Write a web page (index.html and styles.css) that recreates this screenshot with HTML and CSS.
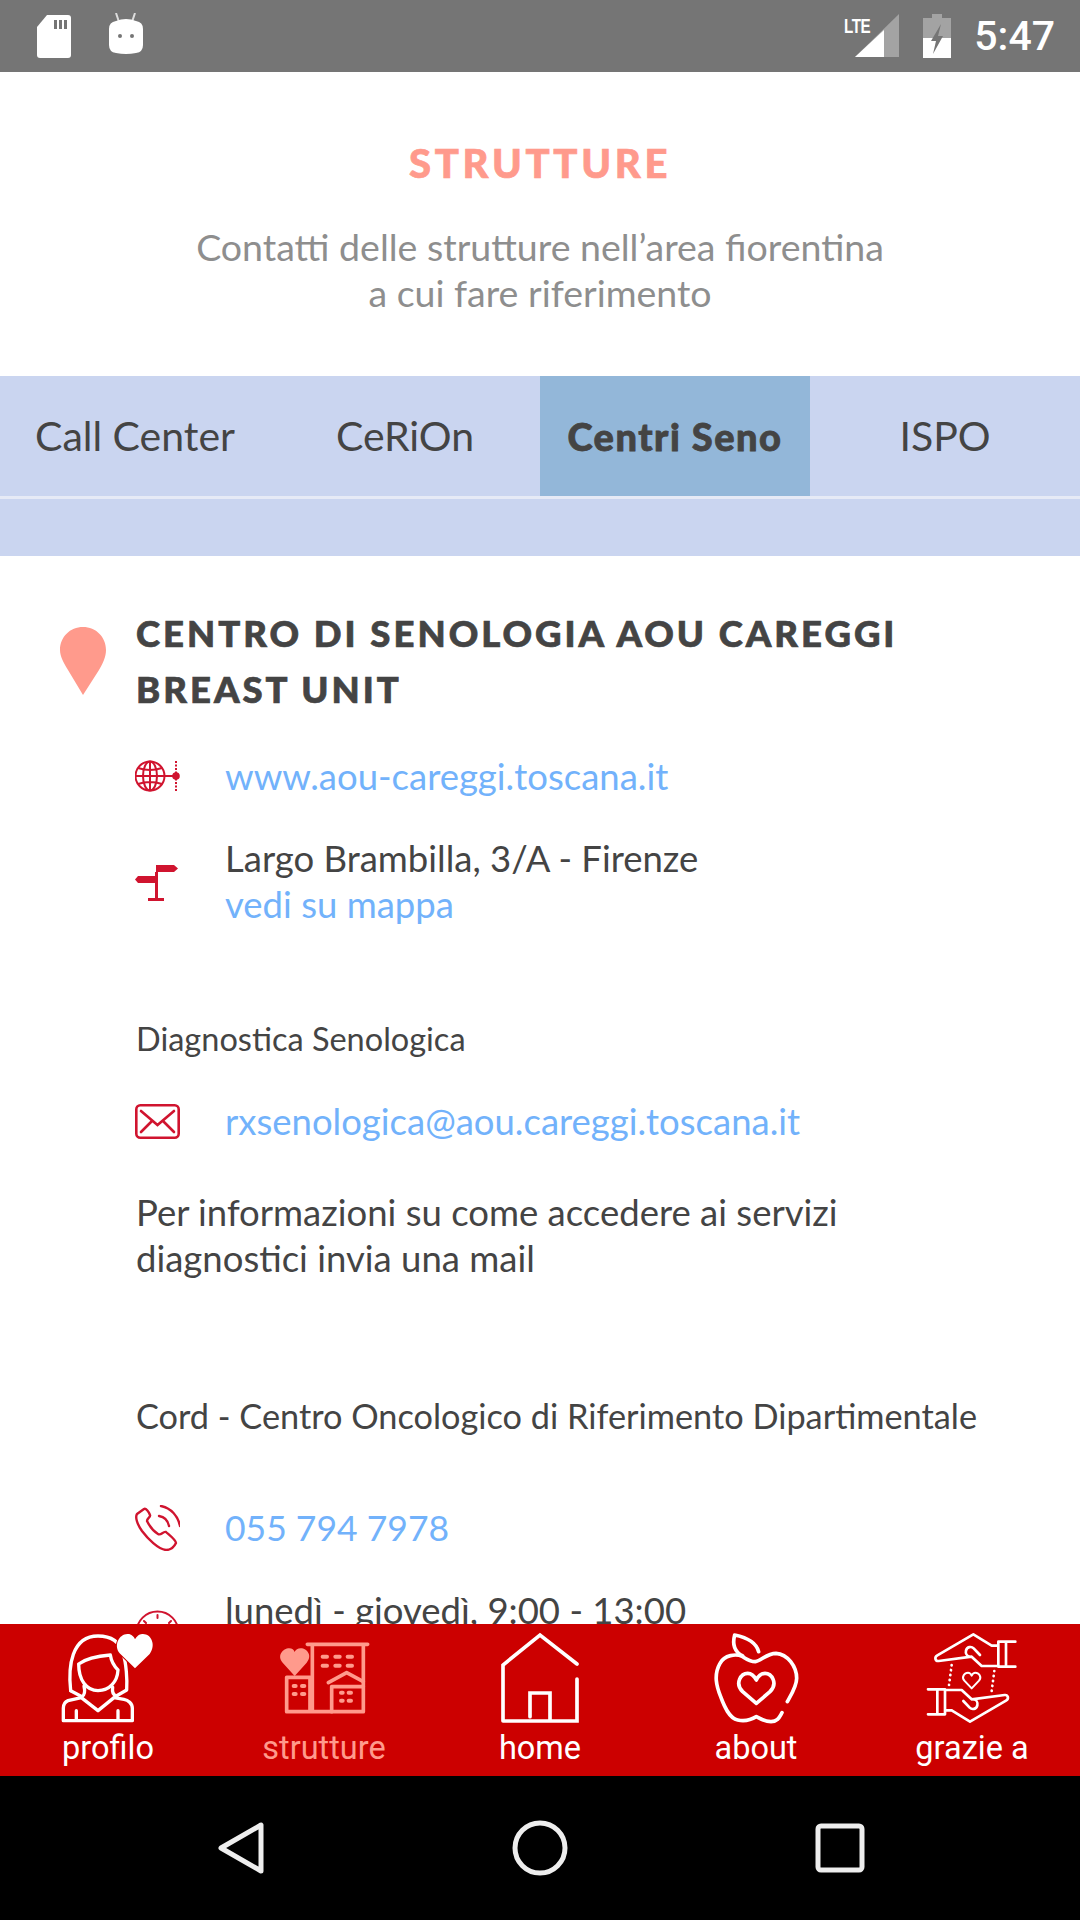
FILE: index.html
```html
<!DOCTYPE html>
<html lang="it">
<head>
    <meta charset="UTF-8">
    <title>Strutture</title>
    <link rel="stylesheet" href="styles.css">
</head>
<body>
    <!-- Barra di stato -->
    <div class="status-bar">
        <svg class="st-sd" viewBox="0 0 34 43"><path d="M10 0H31Q34 0 34 3V40Q34 43 31 43H3Q0 43 0 40V12Z" fill="#fff"/><path d="M17 5h3v9h-3zM22 5h3v9h-3zM27 5h3v9h-3z" fill="#757575"/></svg>
        <svg class="st-bug" viewBox="0 0 36 41"><path d="M8 0l3 9M27 0l-3 9" stroke="#ddd" stroke-width="2" fill="none"/><path d="M8 8Q18 4 28 8Q35 9 35 16V32Q35 39 28 40Q18 42 8 40Q1 39 1 32V16Q1 9 8 8Z" fill="#fff"/><circle cx="12" cy="23" r="2" fill="#757575"/><circle cx="24" cy="23" r="2" fill="#757575"/></svg>
        <span class="st-space"></span>
        <svg class="st-signal" viewBox="0 0 54 44"><path d="M54 0V43H10Z" fill="#a3a3a3"/><path d="M39 16V43H10Z" fill="#fff"/><text transform="translate(-1 19) scale(.95 1.25)" class="st-lte">LTE</text></svg>
        <svg class="st-batt" viewBox="0 0 28 44"><path d="M9 0H19V4H28V44H0V4H9Z" fill="#a3a3a3"/><path d="M0 24H28V44H0Z" fill="#fff"/><path d="M18 10L8 27H13L10 40L20 22H15Z" fill="#757575"/></svg>
        <span class="st-time">5:47</span>
    </div>

    <div class="intro">
        <h1>STRUTTURE</h1>
        <p>Contatti delle strutture nell’area fiorentina<br>a cui fare riferimento</p>
    </div>

    <!-- Tab -->
    <div class="tabs">
        <div class="tab">Call Center</div>
        <div class="tab">CeRiOn</div>
        <div class="tab active">Centri Seno</div>
        <div class="tab">ISPO</div>
    </div>
    <div class="tabs-band"></div>

    <div class="content">
        <div class="title-row">
            <svg class="pin" viewBox="0 0 46 68"><path d="M23 0C36 0 46 10 46 23C46 30 43 36 39 43L23 68L8 43C4 36 0 30 0 23C0 10 10 0 23 0Z" fill="#ff9a8c"/></svg>
            <h2>CENTRO DI SENOLOGIA AOU CAREGGI<br>BREAST UNIT</h2>
        </div>

        <div class="row gap-m">
            <svg class="ico" viewBox="0 0 45 32"><g fill="none" stroke="#d0142f" stroke-width="2"><circle cx="15" cy="16" r="14.500"/><ellipse cx="15" cy="16" rx="7" ry="14.500"/><path d="M15 1.500V30.500M1 16H40M3 8Q15 12 27 8M3 24Q15 20 27 24"/><path d="M41 1V31" stroke-dasharray="2 1.500"/></g><circle cx="41" cy="16" r="3.800" fill="#d0142f"/></svg>
            <a class="link">www.aou-careggi.toscana.it</a>
        </div>

        <div class="row gap-m">
            <svg class="ico ico-sign" viewBox="0 0 45 40"><path d="M21 1H39L43 4.500L39 8H21ZM3 12H22V19H3L0 15.500Z" fill="#d0142f"/><path d="M20 8H23V35H20ZM13 34H29V37H13Z" fill="#d0142f"/></svg>
            <div>
                <div>Largo Brambilla, 3/A - Firenze</div>
                <a class="link">vedi su mappa</a>
            </div>
        </div>

        <div class="plain gap-xl thin">Diagnostica Senologica</div>

        <div class="row gap-m">
            <svg class="ico" viewBox="0 0 45 35"><g fill="none" stroke="#d0142f" stroke-width="2.600" stroke-linecap="round"><rect x="1.300" y="1.300" width="42.400" height="32.400" rx="4"/><path d="M6 7L22.500 21L39 7M6 28L17 17M39 28L28 17"/></g></svg>
            <a class="link">rxsenologica@aou.careggi.toscana.it</a>
        </div>

        <div class="plain gap-l">Per informazioni su come accedere ai servizi<br>diagnostici invia una mail</div>

        <div class="plain gap-xxl cord">Cord - Centro Oncologico di Riferimento Dipartimentale</div>

        <div class="row gap-call">
            <svg class="ico" viewBox="0 0 45 46"><g fill="none" stroke="#d0142f" stroke-width="2.400" stroke-linecap="round" stroke-linejoin="round"><path d="M9 4L2 9C0 12 2 19 7 26C13 34 23 44 31 45C35 45 39 42 41 38C41 35 33 29 31 27C28 26 26 31 23 29C18 26 14 20 12 16C12 13 16 12 15 10C14 7 11 3 9 4Z"/><path d="M24 11C30 12 33 16 34 21M26 1C36 3 43 11 45 21"/></g></svg>
            <a class="link phone">055 794 7978</a>
        </div>

        <div class="row gap-m row-top">
            <svg class="ico ico-clock" viewBox="0 0 45 45"><g fill="none" stroke="#d0142f" stroke-width="2"><circle cx="22.500" cy="22.500" r="21"/><path d="M22.500 5V8M9 11L11 13M36 11L34 13" stroke-linecap="round"/></g></svg>
            <div>lunedì - giovedì, 9:00 - 13:00</div>
        </div>
    </div>

    <!-- Menu in basso -->
    <div class="bottom-nav">
        <div class="nav-item">
            <svg viewBox="0 0 360 288"><g fill="none" stroke="#fff" stroke-width="10" stroke-linecap="round" stroke-linejoin="round">
                <path d="M68 182C60 110 70 18 150 18C190 18 215 35 225 70C235 100 238 150 236 180L205 198C195 195 192 185 194 172"/>
                <path d="M68 182L102 200C110 195 112 185 108 168"/>
                <path d="M92 102C115 85 150 78 187 75C190 95 200 110 210 120C208 155 185 182 150 182C115 182 92 150 92 102Z"/>
                <path d="M100 203L60 212C50 216 46 225 46 235V272H253V235C253 220 240 210 228 208L198 203L150 242Z"/>
                <path d="M85 242V270M210 242V270"/></g>
                <path d="M261 115L215 70C195 45 215 10 240 12C250 12 258 20 261 28C265 20 275 10 285 12C310 12 325 45 305 72Z" fill="#fff" stroke="#c00" stroke-width="6" paint-order="stroke"/>
            </svg>
            <span>profilo</span>
        </div>
        <div class="nav-item current">
            <svg viewBox="0 0 360 288"><g fill="none" stroke="#ff9a8c" stroke-width="11" stroke-linecap="round" stroke-linejoin="round">
                <path d="M130 43H311M145 43V245M298 43V245M68 245H298M68 245V142H138V245"/>
                <path d="M193 158L248 128L298 155M203 245V170H298"/></g>
                <g fill="#ff9a8c"><path d="M92 138L56 98C38 78 56 55 76 55C84 55 90 60 92 66C94 60 102 55 110 55C130 55 146 78 128 98Z"/>
                <rect x="170" y="74" width="25" height="12" rx="6"/><rect x="208" y="74" width="25" height="12" rx="6"/><rect x="245" y="74" width="25" height="12" rx="6"/>
                <rect x="170" y="101" width="25" height="12" rx="6"/><rect x="208" y="101" width="25" height="12" rx="6"/><rect x="245" y="101" width="25" height="12" rx="6"/>
                <rect x="83" y="162" width="18" height="12" rx="6"/><rect x="108" y="162" width="19" height="12" rx="6"/><rect x="83" y="186" width="18" height="12" rx="6"/><rect x="108" y="186" width="19" height="12" rx="6"/>
                <rect x="225" y="182" width="17" height="12" rx="6"/><rect x="248" y="182" width="19" height="12" rx="6"/><rect x="225" y="206" width="17" height="12" rx="6"/><rect x="248" y="206" width="19" height="12" rx="6"/></g>
            </svg>
            <span>strutture</span>
        </div>
        <div class="nav-item">
            <svg viewBox="0 0 360 288"><g fill="none" stroke="#fff" stroke-width="11" stroke-linecap="round" stroke-linejoin="miter">
                <path d="M69 273V105L180 15L291 102M291 147V273H69M150 260V189H210V273"/></g>
            </svg>
            <span>home</span>
        </div>
        <div class="nav-item">
            <svg viewBox="0 0 360 288"><g fill="none" stroke="#fff" stroke-width="11" stroke-linecap="round" stroke-linejoin="round">
                <path d="M258 248C250 262 245 275 225 275C208 275 195 268 181 260C168 268 150 275 125 270C100 265 85 230 74 200C62 170 52 135 72 100C85 75 120 70 140 80C155 90 165 95 178 95C195 93 212 70 240 70C275 72 302 110 302 145C302 170 285 195 274 215"/>
                <path d="M116 15C150 22 180 35 188 65M116 15C108 45 115 65 140 78"/>
                <path d="M181 220L140 185C115 160 135 130 155 130C168 130 176 140 181 150C186 140 194 130 207 130C227 130 247 160 222 185Z"/></g>
            </svg>
            <span>about</span>
        </div>
        <div class="nav-item">
            <svg viewBox="0 0 360 288"><g fill="none" stroke="#fff" stroke-width="8" stroke-linecap="round" stroke-linejoin="round">
                <g id="mano">
                    <path d="M259 35H310M259 35V110M282 35V110M259 110H310M239 47L184 13L76 76C66 82 70 94 80 93L179 80L209 108H259M239 47H259"/>
                    <path d="M204 75L185 55C178 48 165 50 162 62C160 70 165 78 172 80"/>
                    <path d="M119 105L111 165" stroke-width="8" stroke-dasharray="1 14"/>
                </g>
                <use href="#mano" transform="rotate(180 179 144)"/>
                <path d="M179 175L157 152C147 140 158 128 168 128C173 128 177 132 179 137C181 132 185 128 190 128C200 128 211 140 201 152Z" stroke-width="6"/></g>
            </svg>
            <span>grazie a</span>
        </div>
    </div>

    <!-- Barra di navigazione Android -->
    <div class="system-bar">
        <svg class="sys sys-back" viewBox="0 0 46 52"><path d="M43 3V49L3 26Z" fill="none" stroke="#eee" stroke-width="5" stroke-linejoin="round"/></svg>
        <svg class="sys sys-home" viewBox="0 0 56 56"><circle cx="28" cy="28" r="25" fill="none" stroke="#eee" stroke-width="5"/></svg>
        <svg class="sys sys-recent" viewBox="0 0 50 50"><rect x="3" y="3" width="44" height="44" rx="3" fill="none" stroke="#eee" stroke-width="5"/></svg>
    </div>
</body>
</html>
```

FILE: styles.css
```css
/* Base */
html, body {
    margin: 0;
    padding: 0;
}

body {
    width: 1080px;
    height: 1920px;
    display: flex;
    flex-direction: column;
    overflow: hidden;
    background: #fff;
    font-family: Lato, "Open Sans", sans-serif;
    font-size: 36.5px;
    line-height: 46px;
    color: #444;
}

/* Barra di stato */
.status-bar {
    height: 72px;
    flex: none;
    display: flex;
    align-items: center;
    background: #757575;
    color: #fff;
}

.st-sd {
    width: 34px;
    height: 43px;
    margin-left: 37px;
}

.st-bug {
    width: 36px;
    height: 41px;
    margin-left: 37px;
    margin-top: -6px;
}

.st-space {
    flex: 1;
}

.st-signal {
    width: 54px;
    height: 44px;
    overflow: visible;
}

.st-lte {
    font-family: "Liberation Sans", sans-serif;
    font-size: 16px;
    font-weight: bold;
    fill: #fff;
    letter-spacing: -0.5px;
}

.st-batt {
    width: 28px;
    height: 44px;
    margin-left: 24px;
}

.st-time {
    font-family: Roboto, sans-serif;
    font-size: 41px;
    font-weight: 500;
    margin-left: 23px;
    margin-right: 25px;
}

/* Titolo */
.intro {
    height: 304px;
    flex: none;
    box-sizing: border-box;
    padding-top: 67px;
    text-align: center;
}

h1 {
    margin: 0;
    font-size: 40px;
    line-height: 48px;
    font-weight: 900;
    letter-spacing: 3.7px;
    color: #ff9a8c;
    -webkit-text-stroke: 0.7px #ff9a8c;
}

.intro p {
    margin: 37px 0 0;
    color: #8e8e8e;
    font-size: 37.5px;
}

/* Tab */
.tabs {
    height: 120px;
    flex: none;
    display: flex;
    background: #cad5f0;
}

.tab {
    width: 270px;
    display: flex;
    align-items: center;
    justify-content: center;
    font-size: 41px;
}

.tab.active {
    background: #93b7d9;
    font-weight: 900;
    font-size: 38px;
    letter-spacing: 1.5px;
    -webkit-text-stroke: 0.8px #444;
}

.tabs-band {
    height: 60px;
    flex: none;
    box-sizing: border-box;
    border-top: 3px solid #e6eaf6;
    background: #cad5f0;
}

/* Contenuto */
.content {
    flex: 1;
    min-height: 0;
    overflow: hidden;
    padding: 49px 0 0 60px;
}

.title-row {
    display: flex;
}

.pin {
    width: 46px;
    height: 68px;
    margin-top: 22px;
    margin-right: 30px;
    flex: none;
}

h2 {
    margin: 0;
    font-size: 36.5px;
    line-height: 56px;
    font-weight: 900;
    letter-spacing: 3px;
    -webkit-text-stroke: 0.7px #444;
}

.row {
    display: flex;
    align-items: center;
    padding-left: 75px;
}

.row-top {
    align-items: flex-start;
}

.ico {
    width: 45px;
    flex: none;
    margin-right: 45px;
}

.ico-sign {
    margin-top: 6px;
}

.ico-clock {
    margin-top: 23px;
}

.link {
    color: #72b2fb;
}

.phone {
    font-size: 35.5px;
}

.plain {
    padding-left: 76px;
}

.thin {
    font-size: 32.5px;
}

.cord {
    font-size: 34.3px;
}

.gap-m {
    margin-top: 36px;
}

.gap-call {
    margin-top: 66px;
}

.gap-l {
    margin-top: 45px;
}

.gap-xl {
    margin-top: 89px;
}

.gap-xxl {
    margin-top: 112px;
}

/* Menu in basso */
.bottom-nav {
    height: 152px;
    flex: none;
    display: flex;
    background: #c00;
    color: #fff;
    font-family: Roboto, sans-serif;
    font-size: 32.5px;
}

.nav-item {
    width: 216px;
    display: flex;
    flex-direction: column;
    align-items: center;
    line-height: 38px;
}

.nav-item svg {
    width: 120px;
    height: 96px;
    margin-top: 6px;
    margin-bottom: 3px;
}

.nav-item.current {
    color: #ff9a8c;
}

/* Barra Android */
.system-bar {
    height: 144px;
    flex: none;
    background: #000;
    display: flex;
    align-items: center;
}

.sys-back {
    width: 46px;
    height: 52px;
    margin-left: 218px;
}

.sys-home {
    width: 56px;
    height: 56px;
    margin-left: 248px;
}

.sys-recent {
    width: 50px;
    height: 50px;
    margin-left: 247px;
}
```
